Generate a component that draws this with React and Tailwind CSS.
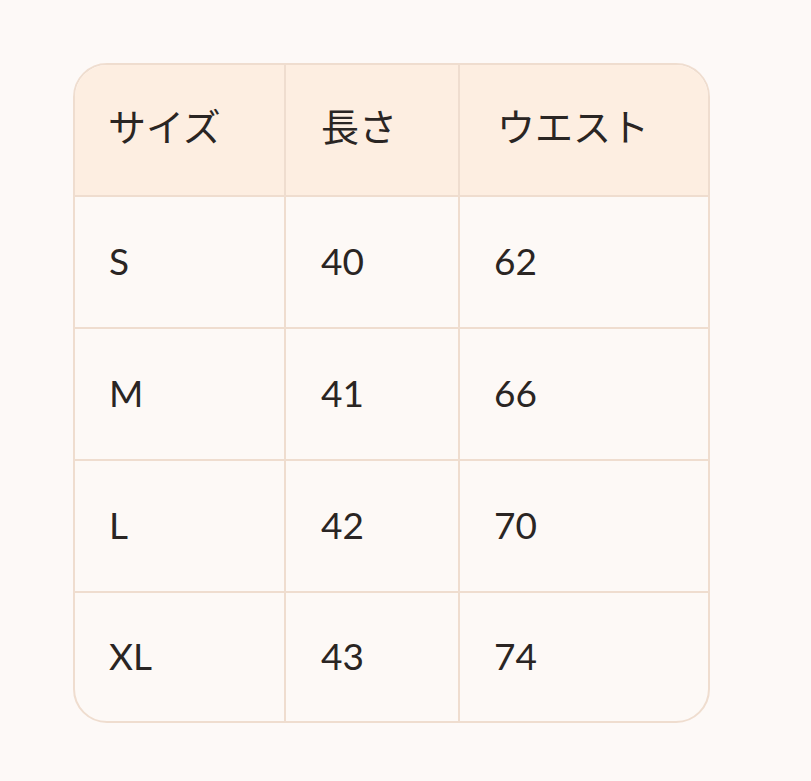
export default function App() {
  const rows = [
    ["S", "40", "62"],
    ["M", "41", "66"],
    ["L", "42", "70"],
    ["XL", "43", "74"],
  ];
  const font = { fontFamily: 'Lato, "Noto Sans CJK JP", sans-serif' };
  return (
    <div className="min-h-[781px] w-full bg-[#fdf9f7] pt-[63px] pl-[73px]" style={font}>
      <div className="w-[637px] overflow-hidden rounded-[34px] border-2 border-[#efddcf] bg-[#fdf9f6] text-[37px] leading-none text-[#2a2523]">
        <div className="grid h-[132px] grid-cols-[211px_174px_1fr] border-b-2 border-[#efddcf] bg-[#fdeee1] text-[38px]">
          <div className="flex items-center border-r-2 border-[#efddcf] pb-[8px] pl-[33px]">サイズ</div>
          <div className="flex items-center border-r-2 border-[#efddcf] pb-[8px] pl-[35px]">長さ</div>
          <div className="flex items-center pb-[8px] pl-[37px]">ウエスト</div>
        </div>
        {rows.map((r, i) => (
          <div
            key={i}
            className={
              "grid grid-cols-[211px_174px_1fr] " +
              (i < rows.length - 1 ? "h-[132px] border-b-2 border-[#efddcf]" : "h-[128px]")
            }
          >
            <div className="flex items-center border-r-2 border-[#efddcf] pb-[3px] pl-[34px]">{r[0]}</div>
            <div className="flex items-center border-r-2 border-[#efddcf] pb-[3px] pl-[35px]">{r[1]}</div>
            <div className="flex items-center pb-[3px] pl-[34px]">{r[2]}</div>
          </div>
        ))}
      </div>
    </div>
  );
}
